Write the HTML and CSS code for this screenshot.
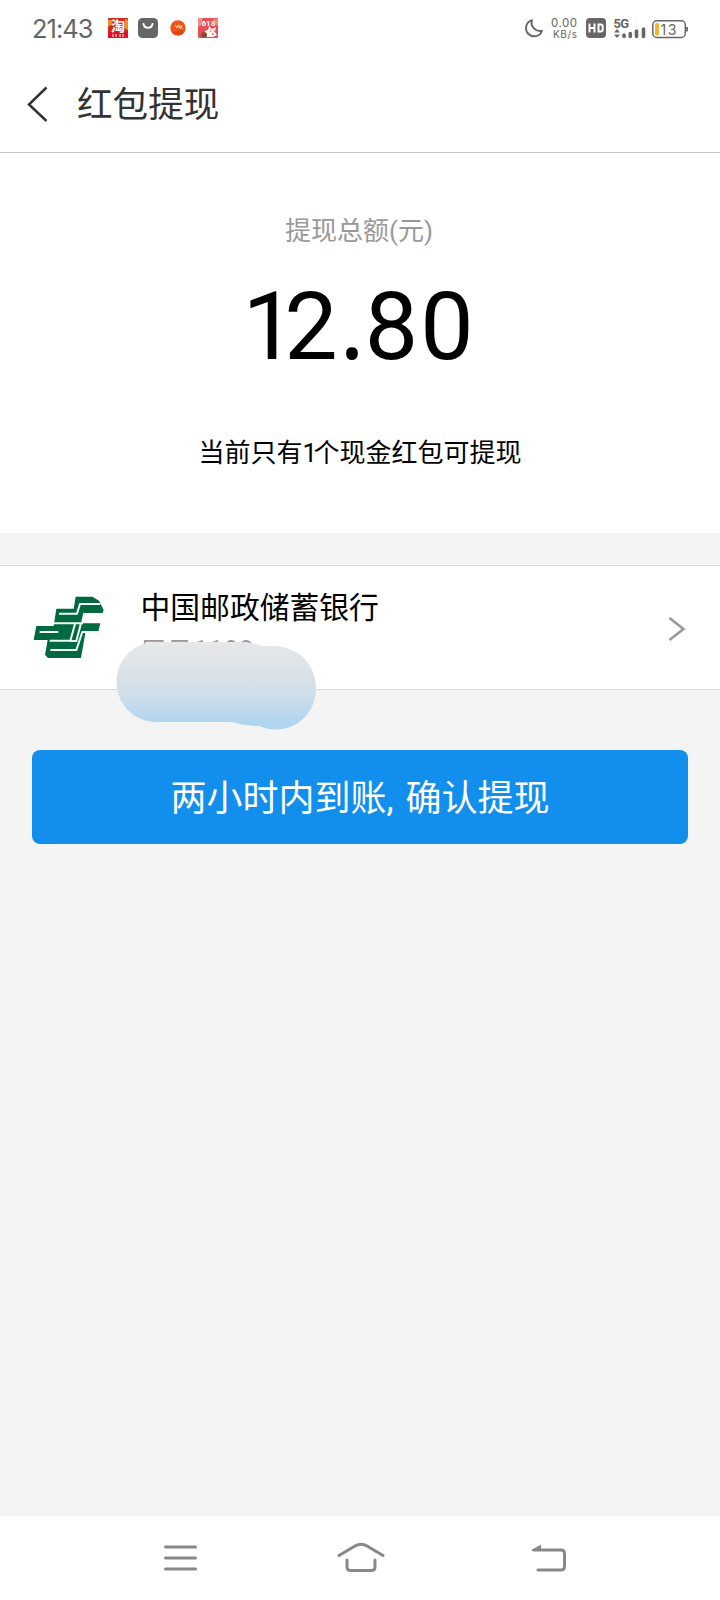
FILE: index.html
```html
<!DOCTYPE html>
<html lang="zh-CN">
<head>
<meta charset="utf-8">
<title>红包提现</title>
<link rel="stylesheet" href="styles.css">
</head>
<body>
<div class="screen">
  <div class="status">
    <span class="clock">21:43</span>
    <svg class="apps" width="112" height="22" viewBox="0 0 112 22">
      <rect x="1" y="1" width="20" height="20" rx="1" fill="#d8281e"/>
      <path d="M1 3h5l-2 5-3 2zM18 2l3 1v10l-4-2z" fill="#e8922a"/>
      <rect x="1" y="15" width="20" height="6" fill="#e50f25"/>
      <text class="tao" x="4" y="14">淘</text>
      <path d="M6 17v3m3-3v3m4-3v3m3-3v3" stroke="#ffd5cf" stroke-width="1.200"/>
      <rect x="31" y="1" width="20" height="20" rx="4.500" fill="#666"/>
      <path d="M36.500 7c1 5 8 5 9 0" fill="none" stroke="#fff" stroke-width="1.900" stroke-linecap="round"/>
      <circle cx="71" cy="11" r="7.700" fill="#ef5518"/>
      <path d="M65 15a7.500 7.500 0 0 0 12 0l-3-2z" fill="#e04416"/>
      <path d="M68 8l2 3 1-3 2 3m0-3v4m2-4l-1 2 2 2" fill="none" stroke="#ffe1a5"/>
      <rect x="91" y="1" width="20" height="20" rx="1" fill="#e64f58"/>
      <path d="M91 1h5l-2 7-3 2zM106 2h5v7l-3-2z" fill="#f28a87"/>
      <text class="sale" x="94.500" y="9">618</text>
      <path d="M98 20c-2-5 0-7 3-7l1-4 3 3 4-2-1 5 2 3-4 2z" fill="#fff1ee"/>
      <circle cx="97" cy="18" r="3" fill="#8b4a38"/>
      <path d="M103 14h1m3 0h1m-3 3h2" stroke="#bd434a"/>
    </svg>
    <svg class="indicators" width="166" height="26" viewBox="522 14 166 26">
      <path d="M532 20.200A8.200 8.200 0 1 0 542 30.700A8.300 8.300 0 0 1 532 20.200Z" fill="none" stroke="#666" stroke-width="1.900" stroke-linejoin="round"/>
      <text class="speed" x="551" y="27" textLength="26">0.00</text>
      <text class="speed unit" x="553" y="38" textLength="24">KB/s</text>
      <rect x="586" y="18" width="20" height="20" rx="4" fill="#666"/>
      <path d="M589.500 23.500v9m5-9v9m-5-4.500h5M598.500 24.500h2.200q2 0 2 2v3q0 2-2 2h-2.200z" fill="none" stroke="#fff" stroke-width="2"/>
      <text class="net" x="613.500" y="28" textLength="15.500">5G</text>
      <path d="M614 32.500l3-3.500 3 3.500zM614 34.500l3 3.500 3-3.500z" fill="#666"/>
      <path d="M624 35v1.500M630.300 33.500v3M636.500 31v5.500M643.500 29v7.500" stroke="#666" stroke-width="3.600" stroke-linecap="round"/>
      <rect x="652.800" y="20.800" width="32.500" height="16.700" rx="4" fill="none" stroke="#666" stroke-width="1.500"/>
      <rect x="655" y="23" width="4" height="12.500" rx="1.500" fill="#f0b72f"/>
      <path d="M687 27v4.500" stroke="#666" stroke-width="1.800"/>
      <text class="charge" x="660.500" y="34.500" textLength="16">13</text>
    </svg>
  </div>
  <header class="header">
    <svg class="back" width="22" height="36" viewBox="0 0 22 36"><path d="M20.500 1.500L3 18.500l17.500 16.500" fill="none" stroke="#333" stroke-width="2.500"/></svg>
    <h1 class="title">红包提现</h1>
  </header>
  <main class="content">
    <section class="summary">
      <div class="label">提现总额(元)</div>
      <div class="amount"><span class="one">1</span><span class="two">2</span><span class="dot">.</span><span class="eight">8</span>0</div>
      <div class="note">当前只有<span class="count">1</span>个现金红包可提现</div>
    </section>
    <section class="bank">
      <svg class="logo" width="72" height="64" viewBox="10 12 216 192">
        <path d="M138 14h50l20 12 14 28-3 9h-56l-6 31h55l-7 29h-38l-13 75H55l-9-10 8-44H12l8-42h52l8-52h52z" fill="#00693f"/>
        <path d="M212 36h-61l-9 29H88M72 94h85l7-31M30 120h56M136 96l-14 50H60M208 120h-50l-18 54H62M154 94l-14 53h-18" fill="none" stroke="#f4fbf7" stroke-width="6"/>
      </svg>
      <div class="details">
        <div class="name">中国邮政储蓄银行</div>
        <div class="account">尾号<span class="digits">1188</span></div>
      </div>
      <svg class="chevron" width="18" height="26" viewBox="0 0 18 26"><path d="M1.500 2L15.500 13l-14 11" fill="none" stroke="#999" stroke-width="2.600"/></svg>
      <svg class="cover" width="200" height="88" viewBox="116 642 200 88">
        <defs><linearGradient id="mist" x1="0" y1="0" x2="0" y2="1"><stop offset="0" stop-color="#e6e8e9"/><stop offset=".3" stop-color="#dde3e7"/><stop offset=".6" stop-color="#cfdfea"/><stop offset=".9" stop-color="#b3d6f0"/><stop offset="1" stop-color="#add4f2"/></linearGradient></defs>
        <path d="M155 642H240Q252 642 262 646H272C298 646 316 664 316 688C316 712 298 729.500 276 729.500Q267 729.500 259 726Q244 726 232 722H157C134 722 116.500 704 116.500 682C116.500 660 134 642 155 642Z" fill="url(#mist)"/>
      </svg>
    </section>
    <button class="confirm">两小时内到账, 确认提现</button>
  </main>
  <nav class="nav">
    <svg width="34" height="26" viewBox="0 0 34 26"><path d="M1.500 2h30M1.500 13h30M1.500 24h30" stroke="#888" stroke-width="3" stroke-linecap="round"/></svg>
    <svg class="home" width="48" height="30" viewBox="0 0 48 30"><path d="M2 13.500L18 4Q24 .500 30 4L46 13.500M10 18v7q0 3.500 3.500 3.500h21q3.500 0 3.500-3.500v-7" fill="none" stroke="#888" stroke-width="3" stroke-linecap="round"/></svg>
    <svg width="36" height="28" viewBox="0 0 36 28"><path d="M3 6h27q3.500 0 3.500 3.500v13q0 3.500-3.500 3.500H7" fill="none" stroke="#888" stroke-width="3" stroke-linecap="round"/><path d="M.500 6L10 .500V7H1z" fill="#888"/></svg>
  </nav>
</div>
</body>
</html>
```
FILE: styles.css
```css
* { box-sizing: border-box; }
body { margin: 0; background: #f4f4f4; font-family: Roboto, "Noto Sans CJK SC", sans-serif; }
.screen { width: 720px; height: 1600px; display: flex; flex-direction: column; }
.status { height: 56px; padding: 0 32px; display: flex; align-items: center; background: #fff; }
.clock { width: 75px; font: 25.5px Inter, sans-serif; letter-spacing: -1px; color: #666; white-space: nowrap; }
.indicators { margin-left: auto; margin-top: -2px; }
.status text { font-family: Roboto, "Noto Sans CJK SC", sans-serif; fill: #666; }
.status .tao { font-size: 14px; font-weight: bold; fill: #fff; }
.status .sale { font-size: 8px; font-weight: bold; fill: #fff; }
.status .speed { font-family: Inter, sans-serif; font-size: 11.5px; }
.status .unit { font-size: 10px; }
.status .net { font-size: 13px; font-weight: bold; }
.status .charge { font-family: Inter, sans-serif; font-size: 14px; }
.header { height: 97px; padding: 2px 0 0 26px; display: flex; align-items: center; gap: 29px; background: #fff; border-bottom: 1px solid #c4c4c4; }
.back { margin-top: -3px; }
.title { margin: 0; font-size: 35.6px; line-height: 54px; font-weight: 400; color: #333; }
.content { flex: 1; }
.summary { height: 380px; padding-top: 59px; background: #fff; text-align: center; }
.label { margin-right: 2px; font-size: 26px; line-height: 38px; color: #999; }
.amount { height: 112px; margin: 21px 4px 0 0; font-size: 95px; line-height: 112px; color: #000; }
.one { letter-spacing: -11.5px; }
.two { letter-spacing: 1.5px; }
.eight { letter-spacing: 2px; }
.dot { font-family: "Noto Sans", sans-serif; line-height: 1; }
.note { margin-top: 51px; font-size: 26px; line-height: 38px; color: #000; }
.count { letter-spacing: -3.5px; }
.bank { position: relative; height: 125px; margin-top: 32px; padding: 0 34px 0 33px; display: flex; align-items: center; background: #fff; border-top: 1px solid #d9d9d9; border-bottom: 1px solid #d9d9d9; }
.details { align-self: flex-start; margin: 20px auto 0 35.5px; }
.name { font-size: 29.8px; line-height: 44px; color: #000; }
.account { margin-top: 3px; font-size: 26px; line-height: 38px; color: #999; }
.digits { display: inline-block; margin-left: 1px; line-height: 34px; letter-spacing: .5px; vertical-align: 2px; }
.chevron { margin-top: 2px; }
.cover { position: absolute; left: 116px; top: 76px; }
.confirm { display: block; width: 656px; height: 94px; margin: 60px 32px 0; padding: 0 0 5px; border: 0; border-radius: 8px; background: #128eec; color: #fff; font: 36px Roboto, "Noto Sans CJK SC", sans-serif; word-spacing: 3px; }
.nav { height: 84px; padding: 0 153px 0 164px; display: flex; align-items: center; justify-content: space-between; background: #fff; }
.home { margin: -2px 8px 0 0; }
```
